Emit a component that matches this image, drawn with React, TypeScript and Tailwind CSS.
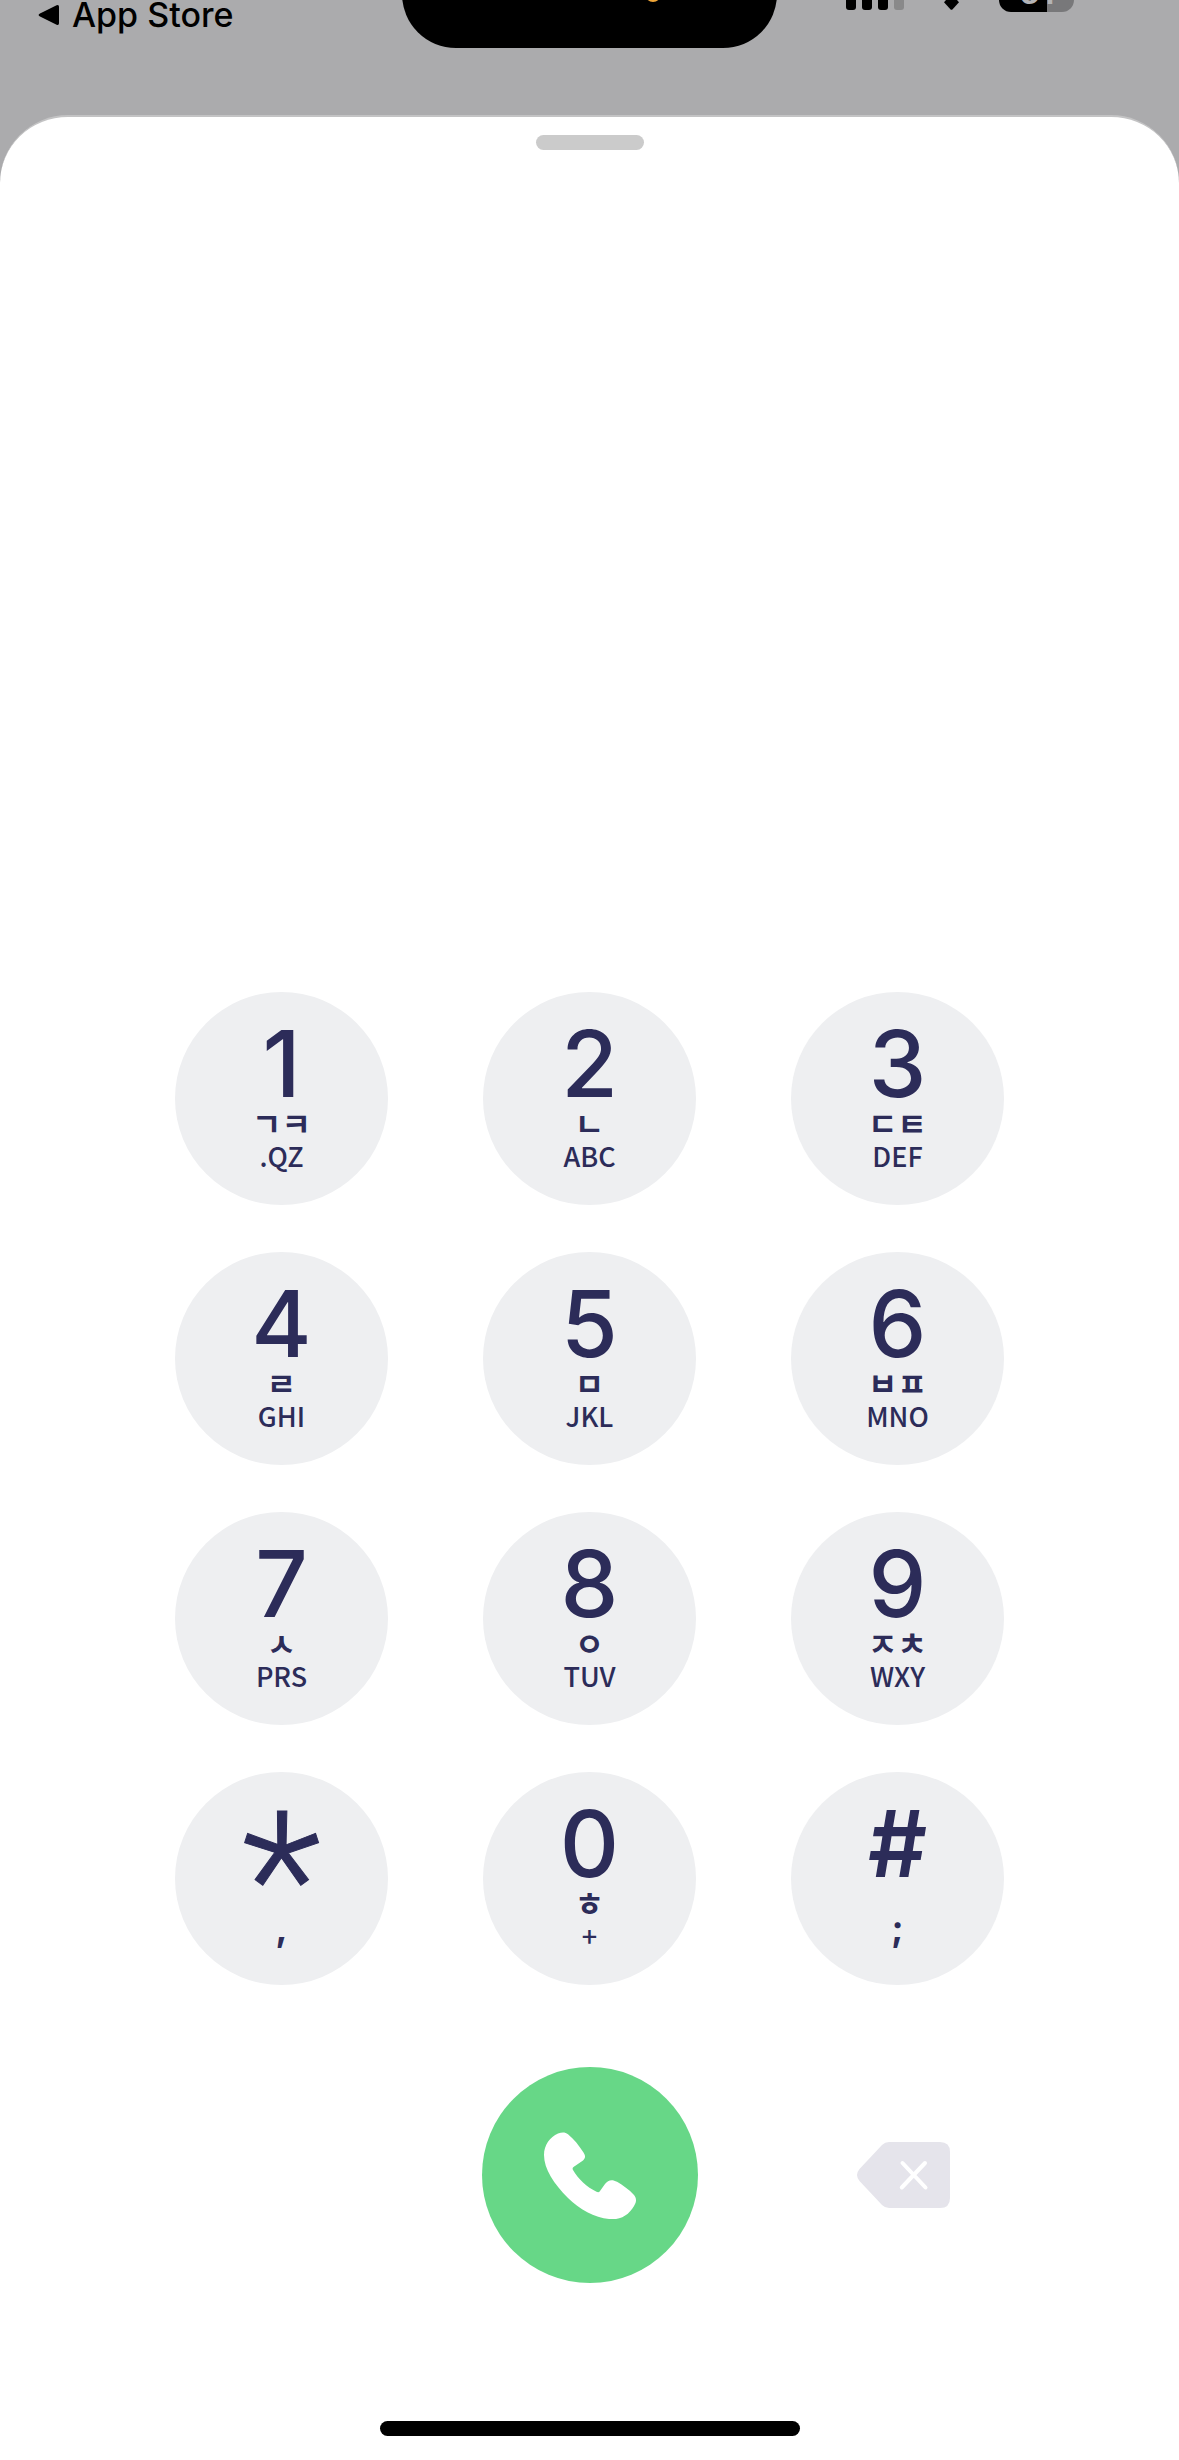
import React, { useState } from 'react';

interface DialKey {
  digit: string;
  jamo?: string;
  letters: string;
}

const KEYS: DialKey[] = [
  { digit: '1', jamo: 'ㄱㅋ', letters: '.QZ' },
  { digit: '2', jamo: 'ㄴ', letters: 'ABC' },
  { digit: '3', jamo: 'ㄷㅌ', letters: 'DEF' },
  { digit: '4', jamo: 'ㄹ', letters: 'GHI' },
  { digit: '5', jamo: 'ㅁ', letters: 'JKL' },
  { digit: '6', jamo: 'ㅂㅍ', letters: 'MNO' },
  { digit: '7', jamo: 'ㅅ', letters: 'PRS' },
  { digit: '8', jamo: 'ㅇ', letters: 'TUV' },
  { digit: '9', jamo: 'ㅈㅊ', letters: 'WXY' },
  { digit: '*', letters: ',' },
  { digit: '0', jamo: 'ㅎ', letters: '+' },
  { digit: '#', letters: ';' },
];

// The symbol keys are drawn with their own weight and size
const DIGIT_STYLES: Record<string, string> = {
  '*': "text-[186px] leading-[150px] font-light font-['Roboto',sans-serif] [-webkit-text-stroke:1px]",
  '#': 'text-[92px] leading-20 font-semibold',
};

export default function App() {
  const [number, setNumber] = useState('');

  return (
    <div className="min-h-screen flex flex-col bg-[#ababad] font-['Inter',sans-serif]">
      <StatusBar />

      {/* Dialer sheet */}
      <main className="flex-1 flex flex-col items-center bg-white border-t-2 border-[#c3c3c4] rounded-t-[68px] pt-4.5 pb-6">
        <div className="w-[108px] h-[15px] rounded-full bg-[#cbcbcb]"></div>

        <output className="flex-1 flex items-center text-[92px] font-medium text-[#2c2c59]">{number}</output>

        <div className="w-full max-w-[829px] grid grid-cols-3 gap-x-[95px] gap-y-[47px]">
          {KEYS.map((key) => (
            <KeyButton key={key.digit} item={key} onPress={() => setNumber(number + key.digit)} />
          ))}
        </div>

        {/* Call row */}
        <div className="w-full max-w-[829px] grid grid-cols-3 gap-x-[95px] items-center justify-items-center mt-[82px] mb-[138px]">
          <button aria-label="Call" className="col-start-2 size-[216px] rounded-full bg-[#67d787] flex items-center justify-center">
            <PhoneIcon />
          </button>
          <button aria-label="Delete" className="pl-3" onClick={() => setNumber(number.slice(0, -1))}>
            <DeleteIcon />
          </button>
        </div>

        <div className="w-[420px] h-[15px] rounded-full bg-black"></div>
      </main>
    </div>
  );
}

// Helper Components
const StatusBar = () => (
  <header className="h-[115px] grid grid-cols-[1fr_375px_1fr] items-start overflow-hidden">
    <a href="#" className="flex items-center pl-[38px] gap-3 h-[29px] text-[34px] leading-[29px] font-medium text-black">
      <svg width="22" height="22" viewBox="0 0 22 22" aria-hidden="true">
        <path d="M2 9.4 18.6 1.3Q21 .4 21 2.8v16.4q0 2.4-2.4 1.5L2 12.6q-2.8-1.6 0-3.2Z" fill="currentColor" />
      </svg>
      App Store
    </a>

    <div className="h-[60px] -mt-3 rounded-b-[54px] bg-black overflow-hidden">
      <div className="size-4 rounded-full bg-[#f0a638] ml-[243px] -mt-0.5"></div>
    </div>

    <div className="flex items-start pl-[69px]">
      <div className="flex gap-1.5">
        <div className="w-2.5 h-2.5 rounded-b-[3px] bg-black"></div>
        <div className="w-2.5 h-2.5 rounded-b-[3px] bg-black"></div>
        <div className="w-2.5 h-2.5 rounded-b-[3px] bg-black"></div>
        <div className="w-2.5 h-2.5 rounded-b-[3px] bg-[#89898a]"></div>
      </div>
      <svg className="ml-10" width="15" height="10" viewBox="0 0 15 10" aria-hidden="true">
        <path d="M2 0h11l2 2.2L8.4 9.4q-.9.9-1.8 0L0 2.2Z" fill="#000" />
      </svg>
      <div className="ml-10 w-[75px] h-3 rounded-b-[12px] flex items-end justify-center overflow-hidden bg-[linear-gradient(90deg,#000_48px,#78787a_48px)]">
        <span className="text-[34px] leading-10 font-semibold text-[#b4b4b6]">61</span>
      </div>
    </div>
  </header>
);

const KeyButton = ({ item, onPress }: { item: DialKey; onPress: () => void }) => (
  <button onClick={onPress} className="aspect-square rounded-full bg-[#eeeff1] flex flex-col items-center pt-8 text-[#2c2c59]">
    <span className={`h-20 ${DIGIT_STYLES[item.digit] ?? 'text-[92px] leading-20 font-medium'}`}>{item.digit}</span>
    <span className="h-9 text-[32px] leading-9 font-bold font-['Noto_Sans_CJK_KR',sans-serif]">{item.jamo}</span>
    {item.jamo ? (
      <span className="text-[27px] leading-8 font-medium font-['Noto_Sans_CJK_KR',sans-serif]">{item.letters}</span>
    ) : (
      <span className="text-[36px] leading-4 font-bold">{item.letters}</span>
    )}
  </button>
);

const PhoneIcon = () => (
  <svg width="92" height="87" viewBox="0 0 92 87" aria-hidden="true">
    <path
      d="M14 1.5C18 0 21-.2 24 2.2 30 7 35 13.5 39.500 20.500 41.800 24 41.500 26 39 28.500L29.500 35Q28 36 29 38C34 47 43 55 52.500 59.800Q54.800 61 56 59L61 52C64 48 68 47 73 49.800 79 53.500 85 57.500 90 63 92 65.500 92.500 68 91.500 71 88 79 81 86 72 87 56 88.500 37 79 24 66 10 52 0 37 0 23 0 13 6 5 14 1.500Z"
      fill="#fff"
    />
  </svg>
);

const DeleteIcon = () => (
  <svg width="93" height="66" viewBox="0 0 93 66" aria-hidden="true">
    <path d="M32 0H83Q93 0 93 10V56Q93 66 83 66H32Q28 66 25 63L2.500 39Q-2.500 33 2.500 27L25 3Q28 0 32 0Z" fill="#e5e4eb" />
    <path d="m45.500 21 23 24.500M68 21 44.800 45.500" stroke="#fff" strokeWidth="4" strokeLinecap="round" />
  </svg>
);
